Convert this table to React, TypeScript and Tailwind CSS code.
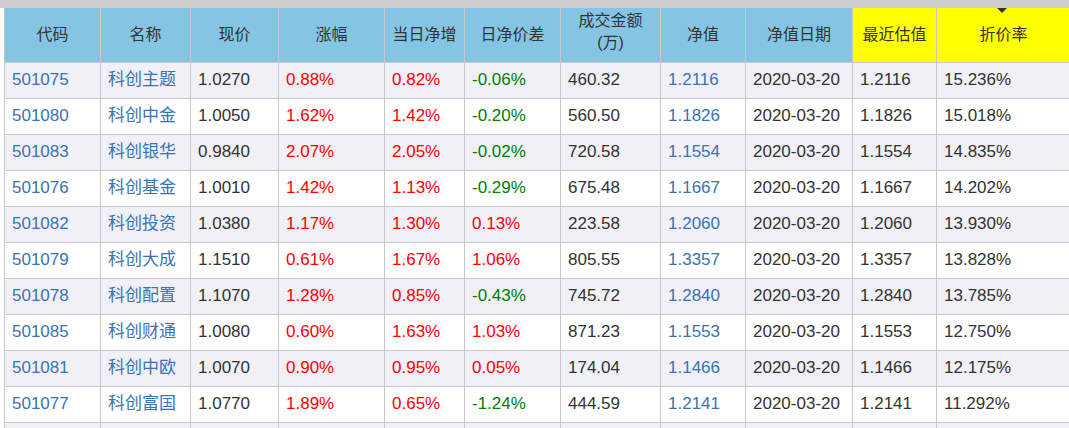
import React from "react";

type Row = {
  code: string;
  name: string;
  price: string;
  chg: string;
  navChg: string;
  diff: string;
  amount: string;
  nav: string;
  date: string;
  est: string;
  disc: string;
};

const rows: Row[] = [
  { code: "501075", name: "科创主题", price: "1.0270", chg: "0.88%", navChg: "0.82%", diff: "-0.06%", amount: "460.32", nav: "1.2116", date: "2020-03-20", est: "1.2116", disc: "15.236%" },
  { code: "501080", name: "科创中金", price: "1.0050", chg: "1.62%", navChg: "1.42%", diff: "-0.20%", amount: "560.50", nav: "1.1826", date: "2020-03-20", est: "1.1826", disc: "15.018%" },
  { code: "501083", name: "科创银华", price: "0.9840", chg: "2.07%", navChg: "2.05%", diff: "-0.02%", amount: "720.58", nav: "1.1554", date: "2020-03-20", est: "1.1554", disc: "14.835%" },
  { code: "501076", name: "科创基金", price: "1.0010", chg: "1.42%", navChg: "1.13%", diff: "-0.29%", amount: "675.48", nav: "1.1667", date: "2020-03-20", est: "1.1667", disc: "14.202%" },
  { code: "501082", name: "科创投资", price: "1.0380", chg: "1.17%", navChg: "1.30%", diff: "0.13%", amount: "223.58", nav: "1.2060", date: "2020-03-20", est: "1.2060", disc: "13.930%" },
  { code: "501079", name: "科创大成", price: "1.1510", chg: "0.61%", navChg: "1.67%", diff: "1.06%", amount: "805.55", nav: "1.3357", date: "2020-03-20", est: "1.3357", disc: "13.828%" },
  { code: "501078", name: "科创配置", price: "1.1070", chg: "1.28%", navChg: "0.85%", diff: "-0.43%", amount: "745.72", nav: "1.2840", date: "2020-03-20", est: "1.2840", disc: "13.785%" },
  { code: "501085", name: "科创财通", price: "1.0080", chg: "0.60%", navChg: "1.63%", diff: "1.03%", amount: "871.23", nav: "1.1553", date: "2020-03-20", est: "1.1553", disc: "12.750%" },
  { code: "501081", name: "科创中欧", price: "1.0070", chg: "0.90%", navChg: "0.95%", diff: "0.05%", amount: "174.04", nav: "1.1466", date: "2020-03-20", est: "1.1466", disc: "12.175%" },
  { code: "501077", name: "科创富国", price: "1.0770", chg: "1.89%", navChg: "0.65%", diff: "-1.24%", amount: "444.59", nav: "1.2141", date: "2020-03-20", est: "1.2141", disc: "11.292%" },
];

const widths = [96, 90, 88, 106, 80, 96, 100, 85, 107, 84, 140];

const font = { fontFamily: '"Liberation Sans", Arial, "Noto Sans CJK SC", sans-serif' };

export default function App() {
  return (
    <div className="w-[1069px] h-[428px] overflow-hidden bg-white" style={font}>
      <div className="h-[8px] bg-[#cfcfcf]" />
      <table className="ml-[4px] border-collapse table-fixed text-[17px]" style={{ width: widths.reduce((a, b) => a + b, 0) }}>
        <colgroup>
          {widths.map((w, i) => (
            <col key={i} style={{ width: w }} />
          ))}
        </colgroup>
        <thead>
          <tr className="h-[54px] text-[16px] text-[#333]">
            {["代码", "名称", "现价", "涨幅", "当日净增", "日净价差"].map((h) => (
              <th key={h} className="border border-[#c8c8c8] border-t-0 bg-[#85c5e4] font-normal text-center align-middle">{h}</th>
            ))}
            <th className="border border-[#c8c8c8] border-t-0 bg-[#85c5e4] font-normal text-center align-middle leading-[22px] pb-[6px]">
              成交金额<br />(万)
            </th>
            {["净值", "净值日期"].map((h) => (
              <th key={h} className="border border-[#c8c8c8] border-t-0 bg-[#85c5e4] font-normal text-center align-middle">{h}</th>
            ))}
            <th className="border border-[#c8c8c8] border-t-0 bg-[#ffff00] font-normal text-center align-middle">最近估值</th>
            <th className="relative border border-[#c8c8c8] border-t-0 bg-[#ffff00] font-normal text-center align-middle pr-[6px]">
              <span className="absolute left-[60px] top-0 w-0 h-0 border-l-[5px] border-r-[5px] border-t-[5px] border-l-transparent border-r-transparent border-t-[#333]" />
              折价率
            </th>
          </tr>
        </thead>
        <tbody>
          {rows.map((r, i) => (
            <tr key={r.code} className={`h-[36px] ${i % 2 === 0 ? "bg-[#f0f0f6]" : "bg-white"}`}>
              <td className="border border-[#c8c8c8] pl-[7px] text-[#3a73b4]">{r.code}</td>
              <td className="border border-[#c8c8c8] pl-[7px] text-[#3a73b4]">{r.name}</td>
              <td className="border border-[#c8c8c8] pl-[7px] text-[#333]">{r.price}</td>
              <td className="border border-[#c8c8c8] pl-[7px] text-[#ff0000]">{r.chg}</td>
              <td className="border border-[#c8c8c8] pl-[7px] text-[#ff0000]">{r.navChg}</td>
              <td className={`border border-[#c8c8c8] pl-[7px] ${r.diff.startsWith("-") ? "text-[#008000]" : "text-[#ff0000]"}`}>{r.diff}</td>
              <td className="border border-[#c8c8c8] pl-[7px] text-[#333]">{r.amount}</td>
              <td className="border border-[#c8c8c8] pl-[7px] text-[#3a73b4]">{r.nav}</td>
              <td className="border border-[#c8c8c8] pl-[7px] text-[#333]">{r.date}</td>
              <td className="border border-[#c8c8c8] pl-[7px] text-[#333]">{r.est}</td>
              <td className="border border-[#c8c8c8] pl-[7px] text-[#333]">{r.disc}</td>
            </tr>
          ))}
          <tr className="h-[36px] bg-[#f0f0f6]">
            {widths.map((_, i) => (
              <td key={i} className="border border-[#c8c8c8]">&nbsp;</td>
            ))}
          </tr>
        </tbody>
      </table>
    </div>
  );
}
